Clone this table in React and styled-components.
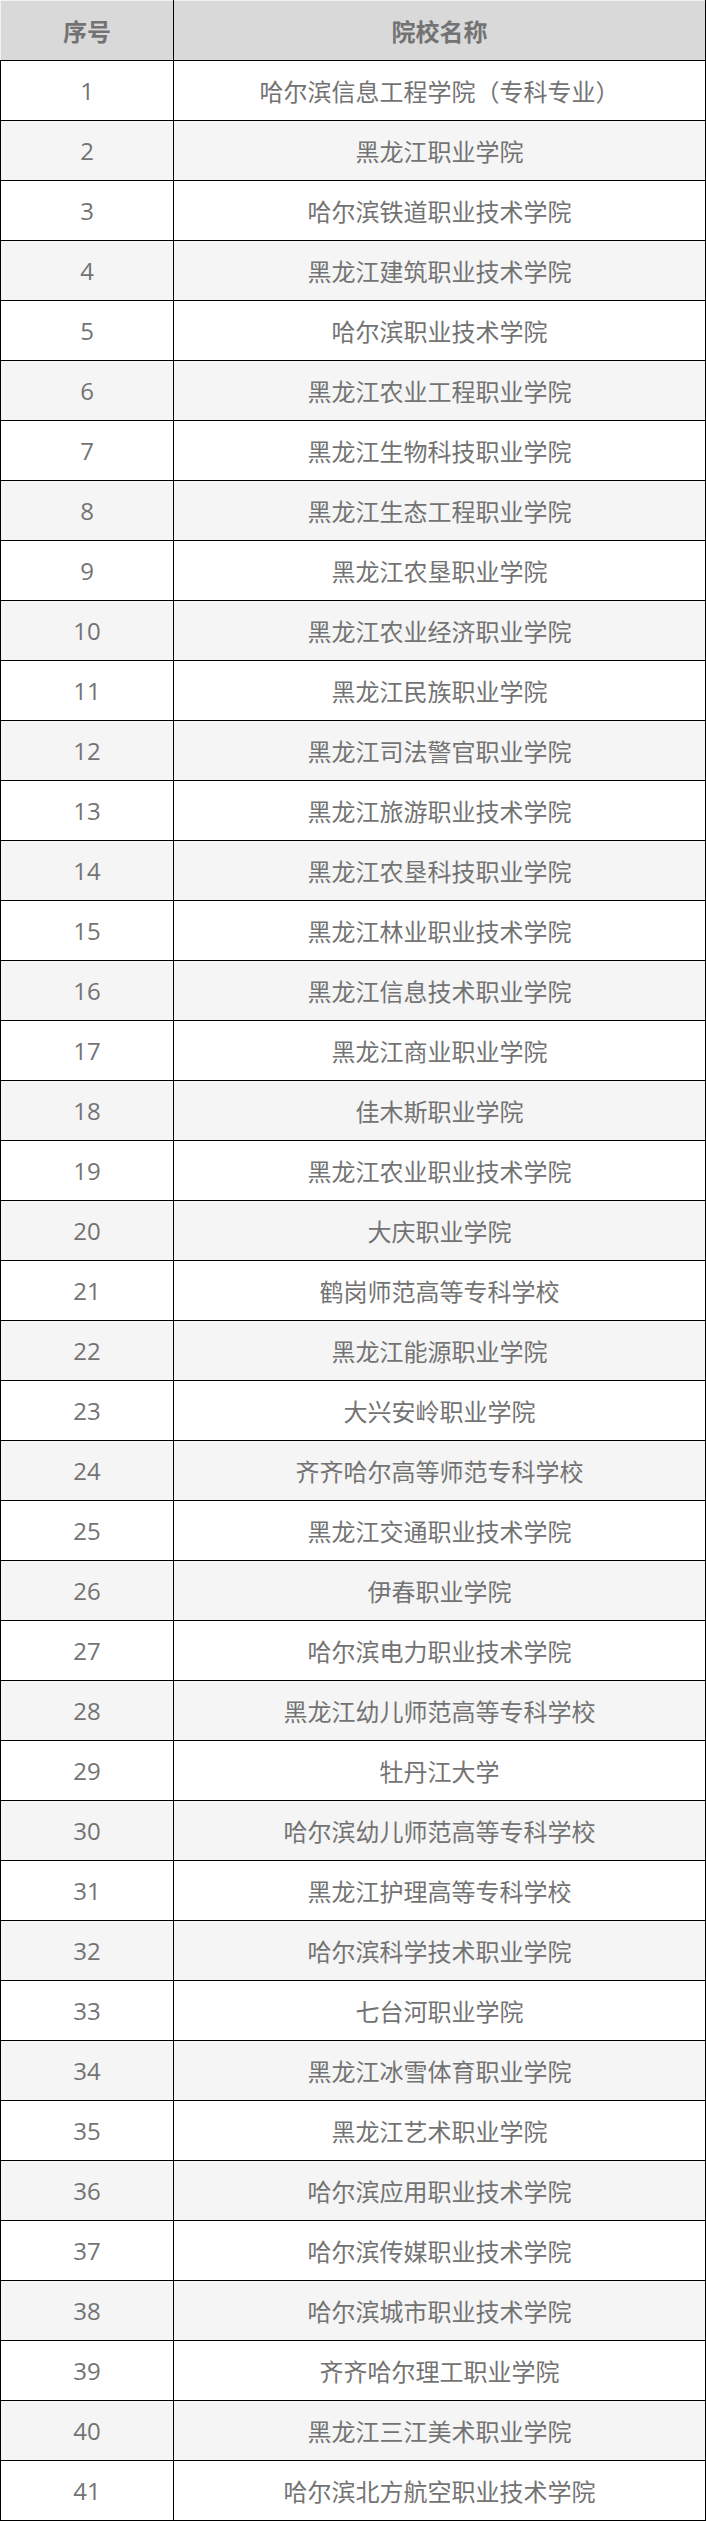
import React from 'react';
import styled, { createGlobalStyle } from 'styled-components';

const GlobalStyle = createGlobalStyle`
  html, body {
    margin: 0;
    padding: 0;
    background: #ffffff;
  }
  body {
    font-family: "Noto Sans CJK SC", "Noto Sans", sans-serif;
  }
`;

const schools = [
  '哈尔滨信息工程学院（专科专业）',
  '黑龙江职业学院',
  '哈尔滨铁道职业技术学院',
  '黑龙江建筑职业技术学院',
  '哈尔滨职业技术学院',
  '黑龙江农业工程职业学院',
  '黑龙江生物科技职业学院',
  '黑龙江生态工程职业学院',
  '黑龙江农垦职业学院',
  '黑龙江农业经济职业学院',
  '黑龙江民族职业学院',
  '黑龙江司法警官职业学院',
  '黑龙江旅游职业技术学院',
  '黑龙江农垦科技职业学院',
  '黑龙江林业职业技术学院',
  '黑龙江信息技术职业学院',
  '黑龙江商业职业学院',
  '佳木斯职业学院',
  '黑龙江农业职业技术学院',
  '大庆职业学院',
  '鹤岗师范高等专科学校',
  '黑龙江能源职业学院',
  '大兴安岭职业学院',
  '齐齐哈尔高等师范专科学校',
  '黑龙江交通职业技术学院',
  '伊春职业学院',
  '哈尔滨电力职业技术学院',
  '黑龙江幼儿师范高等专科学校',
  '牡丹江大学',
  '哈尔滨幼儿师范高等专科学校',
  '黑龙江护理高等专科学校',
  '哈尔滨科学技术职业学院',
  '七台河职业学院',
  '黑龙江冰雪体育职业学院',
  '黑龙江艺术职业学院',
  '哈尔滨应用职业技术学院',
  '哈尔滨传媒职业技术学院',
  '哈尔滨城市职业技术学院',
  '齐齐哈尔理工职业学院',
  '黑龙江三江美术职业学院',
  '哈尔滨北方航空职业技术学院',
];

const Table = styled.table`
  width: 706px;
  border-collapse: collapse;
  table-layout: fixed;
  color: #737373;
  font-size: 24px;
`;

const NumCol = styled.col`
  width: 173px;
`;

const HeadCell = styled.th`
  height: 59px;
  padding: 0;
  background: #d9d9d9;
  font-weight: bold;
  text-align: center;
  vertical-align: middle;
  border: 1px solid #000;
  border-top-color: #f2f2f2;
  border-left-color: ${p => (p.first ? '#f2f2f2' : '#000')};
`;

const Row = styled.tr`
  background: ${p => (p.striped ? '#f5f5f5' : '#ffffff')};
`;

const Cell = styled.td`
  height: 59px;
  padding: 0;
  text-align: center;
  vertical-align: middle;
  border: 1px solid #000;
  white-space: nowrap;
  font-family: ${p => (p.numeric ? '"Open Sans", "Noto Sans", sans-serif' : 'inherit')};
`;

export default function App() {
  return (
    <>
      <GlobalStyle />
      <Table>
        <colgroup>
          <NumCol />
          <col />
        </colgroup>
        <thead>
          <tr>
            <HeadCell first>序号</HeadCell>
            <HeadCell>院校名称</HeadCell>
          </tr>
        </thead>
        <tbody>
          {schools.map((name, i) => (
            <Row key={name} striped={i % 2 === 1}>
              <Cell numeric>{i + 1}</Cell>
              <Cell>{name}</Cell>
            </Row>
          ))}
        </tbody>
      </Table>
    </>
  );
}
